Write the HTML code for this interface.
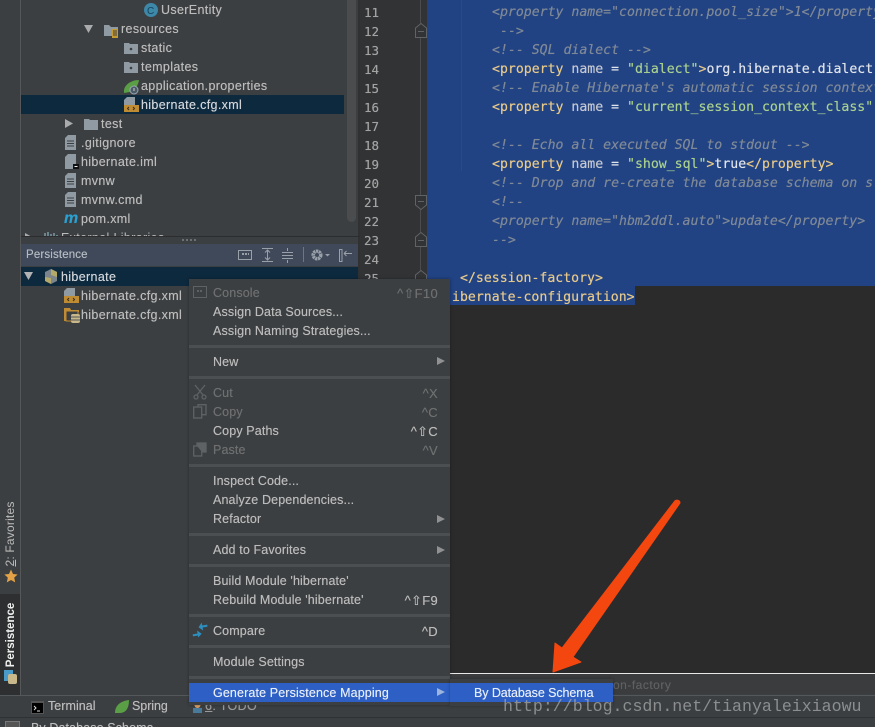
<!DOCTYPE html>
<html><head><meta charset="utf-8">
<style>
html,body{margin:0;padding:0;background:#3c3f41}
#r{position:relative;width:875px;height:727px;overflow:hidden;background:#3c3f41;font-family:"Liberation Sans",sans-serif;font-size:12.5px;letter-spacing:.35px;color:#bbbbbb}
#r div,#r span.a{position:absolute}
.t{white-space:nowrap;line-height:19px;height:19px;margin-top:1px;text-shadow:0 0 .4px currentColor}
.g{color:#a4a3a3;font-family:"DejaVu Sans Mono",monospace;font-size:12.5px;letter-spacing:0;left:364px;white-space:nowrap;line-height:19px;margin-top:1px;text-shadow:0 0 .4px currentColor}
.c{font-family:"DejaVu Sans Mono",monospace;font-size:13.2px;letter-spacing:0;white-space:pre;line-height:19px;height:19px;color:#dfe3ea;margin-top:.5px;text-shadow:0 0 .5px currentColor}
.k{color:#e6c98a}.s{color:#a9d08e}.cm{color:#7f8996;font-style:italic}.n{color:#c4c8d0}
.m{left:213px;white-space:nowrap;line-height:19px;height:19px;color:#bbb;letter-spacing:.13px;margin-top:1px;text-shadow:0 0 .4px currentColor}
#r .d{color:#6d6f70}
.sc{right:437px;white-space:nowrap;line-height:19px;height:19px;color:#bbb;text-align:right;font-size:13px;letter-spacing:.3px;margin-top:1px;text-shadow:0 0 .4px currentColor}
.sep{left:189px;width:261px;height:3px;background:#4c4f51}
.ar{left:437px;width:0;height:0;border-left:8px solid #8f9192;border-top:4px solid transparent;border-bottom:4px solid transparent}
svg{position:absolute;overflow:visible}
</style></head><body>
<div id="r">
<!-- left strip -->
<div style="left:20px;top:0;width:1px;height:696px;background:#555759"></div>
<div style="left:0;top:594px;width:20px;height:102px;background:#2d2f30"></div>
<div style="left:-30px;top:526px;width:80px;height:16px;line-height:16px;transform:rotate(-90deg);white-space:nowrap;text-align:center;font-size:12px;letter-spacing:.2px"><u>2</u>: Favorites</div>
<svg style="left:3.500px;top:569px" width="14" height="14" viewBox="0 0 14 14"><path d="M7 .5 9 5l4.600.5-3.400 3.100 1 4.800L7 11l-4.200 2.400 1-4.800L.4 5.500 5 5z" fill="#e3a245"/></svg>
<div style="left:-29px;top:627px;width:80px;height:16px;line-height:16px;transform:rotate(-90deg);white-space:nowrap;color:#f0f0f0;font-size:11.500px;font-weight:bold;letter-spacing:0;text-align:center">Persistence</div>
<div style="left:4px;top:670px;width:9px;height:11px;background:#4a9ac9"></div>
<div style="left:8px;top:674px;width:9px;height:10px;background:#c9b78c;border-radius:2px"></div>

<!-- tree -->
<div style="left:21px;top:95px;width:323px;height:19px;background:#0d293e"></div>
<div style="left:347px;top:0;width:9px;height:222px;background:#4a4c4e;border-radius:0 0 5px 5px"></div>
<div style="left:358px;top:0;width:2px;height:286px;background:#2f3133"></div>

<svg style="left:144px;top:3px" width="14" height="14"><circle cx="7" cy="7" r="7" fill="#3d87a8"/><text x="3" y="11" font-size="10" fill="#16425a" font-family="Liberation Sans">C</text></svg>
<div class="t" style="left:161px;top:0">UserEntity</div>

<svg style="left:84px;top:25px" width="10" height="9"><path d="M0 0h9L4.500 8z" fill="#a9abad"/></svg>
<svg style="left:104px;top:24px" width="16" height="14"><path d="M0 1h5l2 2h7v9H0z" fill="#8f9aa3"/><rect x="8" y="5" width="6" height="9" fill="#c69a35"/><path d="M9 7h4M9 9h4M9 11h4" stroke="#3c3f41"/></svg>
<div class="t" style="left:121px;top:19px">resources</div>

<svg style="left:124px;top:43px" width="14" height="11"><path d="M0 0h5l1 1h8v10H0z" fill="#8f9aa3"/><circle cx="7" cy="6" r="1.300" fill="#3c3f41"/></svg>
<div class="t" style="left:141px;top:38px">static</div>
<svg style="left:124px;top:62px" width="14" height="11"><path d="M0 0h5l1 1h8v10H0z" fill="#8f9aa3"/><circle cx="7" cy="6" r="1.300" fill="#3c3f41"/></svg>
<div class="t" style="left:141px;top:57px">templates</div>
<svg style="left:124px;top:80px" width="16" height="15"><path d="M0 10C1 4 8 0 15 0 14 6 11 10 6 12L0 13z" fill="#5a9e46"/><circle cx="10" cy="10" r="4" fill="#4a5a66" stroke="#9aa7b0"/><path d="M10 8v3" stroke="#d0d0d0"/></svg>
<div class="t" style="left:141px;top:76px">application.properties</div>
<svg style="left:124px;top:97px" width="15" height="16"><path d="M3 0h8v8H0V3z" fill="#8f9aa3"/><rect y="8" width="15" height="7" fill="#c08c33"/><path d="M5 10 3.500 11.500 5 13M9 10l1.500 1.500L9 13" stroke="#3a2f1a" fill="none"/></svg>
<div class="t" style="left:141px;top:95px;color:#d0d4d8">hibernate.cfg.xml</div>

<svg style="left:65px;top:119px" width="8" height="10"><path d="M0 0v9l8-4.500z" fill="#a9abad"/></svg>
<svg style="left:84px;top:118px" width="14" height="12"><path d="M0 1h5l1 1h8v10H0z" fill="#8f9aa3"/></svg>
<div class="t" style="left:101px;top:114px">test</div>

<svg style="left:65px;top:135px" width="11" height="15"><path d="M3 0h8v15H0V3z" fill="#8f9aa3"/><path d="M2 6h7M2 8.500h7M2 11h7" stroke="#3c3f41"/></svg>
<div class="t" style="left:81px;top:133px">.gitignore</div>
<svg style="left:65px;top:154px" width="14" height="15"><path d="M3 0h8v15H0V3z" fill="#8f9aa3"/><rect x="8" y="10" width="6" height="5" fill="#111"/><path d="M9.500 12.500h3" stroke="#eee"/></svg>
<div class="t" style="left:81px;top:152px">hibernate.iml</div>
<svg style="left:65px;top:173px" width="11" height="15"><path d="M3 0h8v15H0V3z" fill="#8f9aa3"/><path d="M2 6h7M2 8.500h7M2 11h7" stroke="#3c3f41"/></svg>
<div class="t" style="left:81px;top:171px">mvnw</div>
<svg style="left:65px;top:192px" width="11" height="15"><path d="M3 0h8v15H0V3z" fill="#8f9aa3"/><path d="M2 6h7M2 8.500h7M2 11h7" stroke="#3c3f41"/></svg>
<div class="t" style="left:81px;top:190px">mvnw.cmd</div>
<div class="t" style="left:64px;top:208px;color:#2a9fd0;font:italic bold 16px/19px 'Liberation Sans',sans-serif;letter-spacing:0">m</div>
<div class="t" style="left:81px;top:209px">pom.xml</div>
<div style="left:21px;top:228px;width:337px;height:8px;overflow:hidden">
<span class="a" style="left:40px;top:1px;font-size:12.5px;line-height:19px;white-space:nowrap">External Libraries</span>
<svg style="left:23px;top:4px" width="14" height="6"><path d="M1 1v6M4 0v6M7 2v6M10 1v6M13 3v6" stroke="#7d9aa8" stroke-width="1.500"/></svg>
<svg style="left:4px;top:5px" width="8" height="6"><path d="M0 0v9l8-4.500z" fill="#a9abad"/></svg>
</div>

<!-- persistence header -->
<div style="left:21px;top:236px;width:339px;height:1px;background:#2c2d2e"></div>
<div style="left:182px;top:239px;width:14px;height:1px;border-top:2px dotted #6d7072"></div>
<div style="left:21px;top:244px;width:337px;height:22px;background:#3f495a"></div>
<div class="t" style="left:26px;top:245px;font-size:11.500px;color:#b5bac0;letter-spacing:.15px">Persistence</div>
<svg style="left:237px;top:248px" width="122" height="17" fill="none" stroke="#9aa0a8">
<rect x="1.500" y="2.500" width="13" height="9"/><path d="M5 6h7" stroke-width="2" stroke-dasharray="2 1"/>
<path d="M25 .5h11M25 13.500h11M30.500 2v10M28 4.500l2.500-2.500 2.500 2.500M28 9.500l2.500 2.500 2.500-2.500"/>
<path d="M45 7.500h11M45 4.500h11M45 10.500h11M50.500 0v3M50.500 12v3"/>
<path d="M66.500 -1v15" stroke="#707580"/>
<circle cx="80" cy="7" r="3.800" stroke-width="3.500" stroke-dasharray="2.200 .6"/><path d="M88 6h5l-2.500 2.500z" fill="#9aa0a8" stroke="none"/>
<rect x="102.500" y="1.500" width="2.500" height="12"/><path d="M107 5.500h8M107 5.500l2.500-2.500M107 5.500l2.500 2.500"/>
</svg>

<div style="left:21px;top:267px;width:337px;height:19px;background:#0d293e"></div>
<svg style="left:24px;top:272px" width="10" height="9"><path d="M0 0h9L4.500 8z" fill="#b0b2b4"/></svg>
<svg style="left:44px;top:269px" width="14" height="15"><path d="M7 0 13 3v9l-6 3-6-3V3z" fill="#7d858c"/><path d="M7 0l6 3v5L7 6z" fill="#b5a969"/><path d="M1 8l6 1v6l-6-3z" fill="#b5a969"/></svg>
<div class="t" style="left:61px;top:267px;color:#d0d4d8">hibernate</div>
<svg style="left:64px;top:288px" width="15" height="16"><path d="M3 0h8v8H0V3z" fill="#8f9aa3"/><rect y="8" width="15" height="7" fill="#c08c33"/><path d="M5 10 3.500 11.500 5 13M9 10l1.500 1.500L9 13" stroke="#3a2f1a" fill="none"/></svg>
<div class="t" style="left:81px;top:286px">hibernate.cfg.xml</div>
<svg style="left:64px;top:308px" width="16" height="15"><path d="M0 0h6l1 2h8v2H3v9H0z" fill="#c08c33"/><rect x="2" y="3" width="12" height="10" fill="#3c3f41" stroke="#c08c33"/><rect x="7" y="6" width="9" height="9" rx="2" fill="#c9b78c"/><path d="M7 9h9M7 12h9" stroke="#555"/></svg>
<div class="t" style="left:81px;top:305px">hibernate.cfg.xml</div>

<!-- gutter and editor -->
<div style="left:360px;top:0;width:67px;height:290px;background:#313335"></div>
<div style="left:450px;top:286px;width:425px;height:387px;background:#2b2b2b"></div>
<div style="left:427px;top:0;width:448px;height:286px;background:#214283"></div>
<div style="left:427px;top:286px;width:208px;height:19px;background:#214283"></div>
<div style="left:420px;top:0;width:1px;height:280px;background:#4a4c4e"></div>
<div style="left:461px;top:0;width:1px;height:171px;background:#2c4a7e"></div>
<svg style="left:415px;top:23px" width="12" height="15" fill="#313335" stroke="#606366"><path d="M.5 14.500V5L6 .5 11.500 5v9.500z"/><path d="M3 8.500h6"/></svg>
<svg style="left:415px;top:195px" width="12" height="15" fill="#313335" stroke="#606366"><path d="M.5 .5V10L6 14.500 11.500 10V.5z"/><path d="M3 6.500h6"/></svg>
<svg style="left:415px;top:232px" width="12" height="15" fill="#313335" stroke="#606366"><path d="M.5 14.500V5L6 .5 11.500 5v9.500z"/><path d="M3 8.500h6"/></svg>
<svg style="left:415px;top:270px" width="12" height="15" fill="#313335" stroke="#606366"><path d="M.5 14.500V5L6 .5 11.500 5v9.500z"/></svg>

<div class="g" style="top:2px">11</div><div class="g" style="top:21px">12</div><div class="g" style="top:40px">13</div><div class="g" style="top:59px">14</div><div class="g" style="top:78px">15</div><div class="g" style="top:97px">16</div><div class="g" style="top:116px">17</div><div class="g" style="top:135px">18</div><div class="g" style="top:154px">19</div><div class="g" style="top:173px">20</div><div class="g" style="top:192px">21</div><div class="g" style="top:211px">22</div><div class="g" style="top:230px">23</div><div class="g" style="top:249px">24</div><div class="g" style="top:268px;height:11px;overflow:hidden">25</div>

<div class="c cm" style="left:492px;top:2px">&lt;property name="connection.pool_size"&gt;1&lt;/property&gt;</div>
<div class="c cm" style="left:500px;top:21px">--&gt;</div>
<div class="c cm" style="left:492px;top:40px">&lt;!-- SQL dialect --&gt;</div>
<div class="c" style="left:492px;top:59px"><span class="k">&lt;property</span> <span class="n">name</span> = <span class="s">"dialect"</span><span class="k">&gt;</span>org.hibernate.dialect</div>
<div class="c cm" style="left:492px;top:78px">&lt;!-- Enable Hibernate's automatic session context</div>
<div class="c" style="left:492px;top:97px"><span class="k">&lt;property</span> <span class="n">name</span> = <span class="s">"current_session_context_class"</span></div>
<div class="c cm" style="left:492px;top:135px">&lt;!-- Echo all executed SQL to stdout --&gt;</div>
<div class="c" style="left:492px;top:154px"><span class="k">&lt;property</span> <span class="n">name</span> = <span class="s">"show_sql"</span><span class="k">&gt;</span>true<span class="k">&lt;/property&gt;</span></div>
<div class="c cm" style="left:492px;top:173px">&lt;!-- Drop and re-create the database schema on s</div>
<div class="c cm" style="left:492px;top:192px">&lt;!--</div>
<div class="c cm" style="left:492px;top:211px">&lt;property name="hbm2ddl.auto"&gt;update&lt;/property&gt;</div>
<div class="c cm" style="left:492px;top:230px">--&gt;</div>
<div class="c k" style="left:460px;top:268px">&lt;/session-factory&gt;</div>
<div class="c k" style="left:452px;top:287px">ibernate-configuration&gt;</div>

<!-- bottom -->
<div style="left:450px;top:673px;width:425px;height:1px;background:#e8e8e8"></div>
<div style="left:450px;top:674px;width:425px;height:20px;background:#3a3c3e"></div>
<div class="t" style="left:613px;top:675px;color:#5e6062;font-size:12px;letter-spacing:.5px">on-factory</div>
<div style="left:0;top:695px;width:875px;height:1px;background:#55585a"></div>
<div style="left:0;top:696px;width:875px;height:31px;background:#3c3f41"></div>
<div style="left:0;top:717px;width:875px;height:1px;background:#2f3133"></div>
<svg style="left:31px;top:701px" width="13" height="13"><rect width="13" height="13" fill="#555"/><rect y="2" x="1" width="11" height="10" fill="#000"/><path d="M3 5l2 2-2 2M6 10h3" stroke="#ddd" fill="none"/></svg>
<div class="t" style="left:48px;top:696px;letter-spacing:.05px">Terminal</div>
<svg style="left:115px;top:700px" width="14" height="14"><path d="M0 13C0 5 6 1 14 0c0 8-3 13-9 13-2 0-3 0-5 0z" fill="#5a9e46"/></svg>
<div class="t" style="left:132px;top:696px;letter-spacing:-.05px">Spring</div>
<svg style="left:192px;top:702px" width="11" height="11"><circle cx="5.500" cy="3" r="3" fill="#d9a066"/><rect x="1" y="6" width="9" height="5" fill="#4a7a9a"/></svg>
<div class="t" style="left:205px;top:696px;color:#9a9a9a"><u>6</u>: TODO</div>
<div style="left:5px;top:721px;width:13px;height:8px;background:#555;border:1px solid #777"></div>
<div class="t" style="left:31px;top:718px;letter-spacing:.1px">By Database Schema</div>

<!-- context menu -->
<div style="left:189px;top:279px;width:261px;height:426px;background:#3c3f41;box-shadow:0 0 3px rgba(0,0,0,.35)"></div>
<svg style="left:193px;top:286px" width="15" height="13" fill="none" stroke="#5f6264"><rect x=".5" y=".5" width="13" height="11"/><path d="M4 5h6" stroke-dasharray="2 1" stroke-width="2"/></svg>
<div class="m d" style="top:283px">Console</div><div class="sc d" style="top:283px">^⇧F10</div>
<div class="m" style="top:302px">Assign Data Sources...</div>
<div class="m" style="top:321px">Assign Naming Strategies...</div>
<div class="sep" style="top:345px"></div>
<div class="m" style="top:352px">New</div><div class="ar" style="top:357px"></div>
<div class="sep" style="top:376px"></div>
<svg style="left:193px;top:385px" width="15" height="15" fill="none" stroke="#5f6264" stroke-width="1.300"><path d="M2 0l8 10M12 0 4 10"/><circle cx="3" cy="12" r="2"/><circle cx="11" cy="12" r="2"/></svg>
<div class="m d" style="top:383px">Cut</div><div class="sc d" style="top:383px">^X</div>
<svg style="left:193px;top:404px" width="15" height="15" fill="none" stroke="#5f6264" stroke-width="1.300"><rect x=".7" y="3" width="8" height="11"/><path d="M5 3V.7h8v10H9"/></svg>
<div class="m d" style="top:402px">Copy</div><div class="sc d" style="top:402px">^C</div>
<div class="m" style="top:421px">Copy Paths</div><div class="sc" style="top:421px">^⇧C</div>
<svg style="left:193px;top:442px" width="15" height="15" fill="none" stroke="#5f6264" stroke-width="1.300"><rect x=".7" y="4" width="8" height="10"/><path d="M4 4V1h9v9H9" fill="#5f6264"/></svg>
<div class="m d" style="top:440px">Paste</div><div class="sc d" style="top:440px">^V</div>
<div class="sep" style="top:464px"></div>
<div class="m" style="top:471px">Inspect Code...</div>
<div class="m" style="top:490px">Analyze Dependencies...</div>
<div class="m" style="top:509px">Refactor</div><div class="ar" style="top:515px"></div>
<div class="sep" style="top:533px"></div>
<div class="m" style="top:540px">Add to Favorites</div><div class="ar" style="top:546px"></div>
<div class="sep" style="top:564px"></div>
<div class="m" style="top:571px">Build Module 'hibernate'</div>
<div class="m" style="top:590px">Rebuild Module 'hibernate'</div><div class="sc" style="top:590px">^⇧F9</div>
<div class="sep" style="top:614px"></div>
<svg style="left:192px;top:623px" width="16" height="15" fill="#2c8fc0"><path d="M0 10h5V7l4 4-4 3v-2H0zM16 3h-5V0L7 4l4 4V5h5z" transform="rotate(-10 8 7)"/></svg>
<div class="m" style="top:621px">Compare</div><div class="sc" style="top:621px">^D</div>
<div class="sep" style="top:645px"></div>
<div class="m" style="top:652px">Module Settings</div>
<div class="sep" style="top:676px"></div>
<div style="left:189px;top:683px;width:261px;height:19px;background:#2d5fc4"></div>
<div class="m" style="top:683px;color:#e6edf8">Generate Persistence Mapping</div><div class="ar" style="top:688px;border-left-color:#9db4de"></div>
<div style="left:450px;top:679px;width:163px;height:27px;background:#3c3f41;box-shadow:0 0 3px rgba(0,0,0,.3)"></div>
<div style="left:450px;top:683px;width:163px;height:19px;background:#2d5fc4"></div>
<div class="t" style="left:474px;top:683px;color:#e6edf8;letter-spacing:-.08px">By Database Schema</div>

<!-- arrow -->
<svg style="left:0;top:0" width="875" height="727"><path d="M680 503C680 500 676 499 674 502L562 648 555 643 553 672 581 662 573 657Z" fill="#f4470f" stroke="#f4470f" stroke-width="1" stroke-linejoin="round"/></svg>

<!-- watermark -->
<div style="left:503px;top:695px;white-space:nowrap;font:16.6px/24px 'Liberation Mono',monospace;letter-spacing:0;color:rgba(165,168,170,.75)">http://blog.csdn.net/tianyaleixiaowu</div>
</div>
</body></html>
